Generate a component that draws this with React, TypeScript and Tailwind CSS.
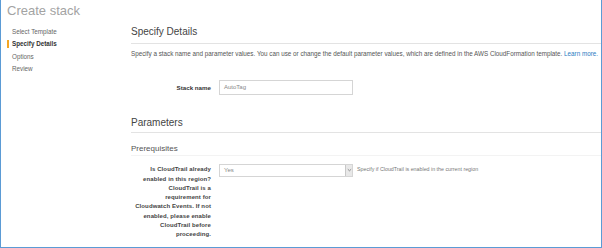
import React from "react";

const steps = ["Select Template", "Specify Details", "Options", "Review"];

const labelLines = [
  "Is CloudTrail already",
  "enabled in this region?",
  "CloudTrail is a",
  "requirement for",
  "Cloudwatch Events. If not",
  "enabled, please enable",
  "CloudTrail before",
  "proceeding.",
];

export default function App() {
  return (
    <div
      className="w-[602px] h-[248px] bg-white border-l border-r border-b border-[#5b9bd5] overflow-hidden text-[#444]"
      style={{ fontFamily: '"Liberation Sans", Arial, sans-serif' }}
    >
      <div className="h-[22px] pl-[6px] flex items-center text-[13px] text-[#a3a3a3]">Create stack</div>
      <div className="flex">
        {/* wizard steps */}
        <div className="w-[130px] shrink-0 pl-[6px] pt-[3px]">
          {steps.map((s, i) => {
            const active = i === 1;
            return (
              <div key={s} className="h-[12.5px] flex items-center">
                <span className={`w-[2px] h-[8px] ${active ? "bg-[#f5a623]" : "bg-transparent"}`} />
                <span className={`ml-[3px] text-[6.3px] ${active ? "font-bold text-[#333]" : "text-[#666]"}`}>{s}</span>
              </div>
            );
          })}
        </div>

        <div className="flex-1 min-w-0">
          <div className="h-[22px] flex items-center pb-[2px] border-b border-[#e3e3e3] text-[10px] text-[#444]">
            Specify Details
          </div>
          <p className="mt-[6px] text-[6.3px] leading-[8px] whitespace-nowrap text-[#555]">
            Specify a stack name and parameter values. You can use or change the default parameter values, which are
            defined in the AWS CloudFormation template. <span className="text-[#2a7bbf]">Learn more.</span>
          </p>

          <div className="mt-[22px] flex items-center">
            <div className="w-[80px] text-right text-[6.2px] font-bold text-[#333]">Stack name</div>
            <div className="ml-[8px] w-[134px] h-[15px] border border-[#d5d5d5] flex items-center px-[4px] text-[6px] text-[#888]">
              AutoTag
            </div>
          </div>

          <div className="mt-[18px] h-[20px] flex items-center border-b border-[#e3e3e3] text-[10px] text-[#444]">
            Parameters
          </div>

          <div className="pt-[9px] h-[23px] flex items-center border-b border-[#f3f3f3] text-[8px] text-[#555]">
            Prerequisites
          </div>

          <div className="mt-[8px] flex items-start">
            <div className="w-[80px] pt-[1.3px] text-right text-[6px] leading-[9.3px] font-bold text-[#444] tracking-[0.1px]">
              {labelLines.map((l) => (
                <div key={l} className="whitespace-nowrap">{l}</div>
              ))}
            </div>
            <div className="ml-[8px] w-[134px] h-[12.5px] border border-[#d5d5d5] flex items-center">
              <span className="flex-1 pl-[4px] text-[6px] text-[#888]">Yes</span>
              <span className="w-[7px] h-full bg-[#e8e8e8] border-l border-[#c8c8c8] flex items-center justify-center">
                <svg width="5" height="4" viewBox="0 0 5 4">
                  <path d="M0.8 1.2 L2.5 2.8 L4.2 1.2" fill="none" stroke="#777" strokeWidth="0.8" />
                </svg>
              </span>
            </div>
            <div className="ml-[4px] h-[12.5px] flex items-center text-[5.3px] text-[#777] whitespace-nowrap">
              Specify if CloudTrail is enabled in the current region
            </div>
          </div>
        </div>
      </div>
    </div>
  );
}
